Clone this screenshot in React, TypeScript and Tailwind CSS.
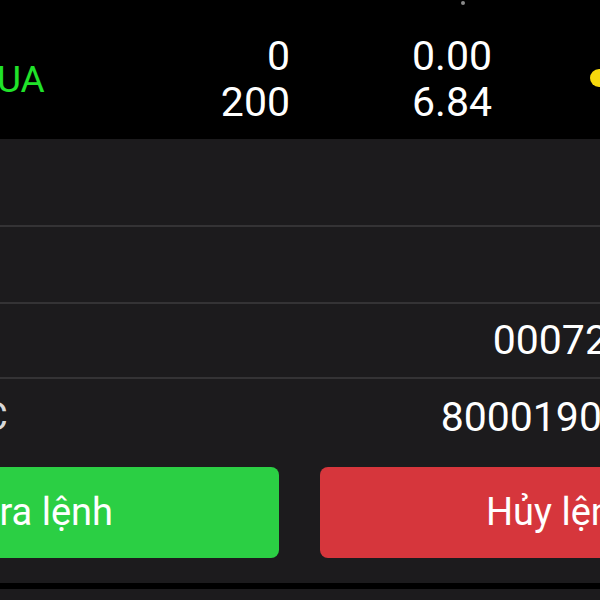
export default function App() {
  return (
    <div className="relative w-[600px] h-[600px] overflow-hidden bg-[#1c1b1d] font-['Roboto',sans-serif] text-white">
      {/* quote row */}
      <div className="relative h-[139px] bg-black">
        <div className="absolute left-[461px] top-[1px] w-[4px] h-[4px] rounded-full bg-[#8a8a8a]" />
        <div className="flex items-center h-full">
          <div className="w-[200px] shrink-0 -ml-[3px] mt-[20px] text-[37px] text-[#20e22a] leading-none">UA</div>
          <div className="w-[93px] shrink-0 text-right text-[41px] leading-[46px] mt-[18px]">
            <div>0</div>
            <div>200</div>
          </div>
          <div className="w-[202px] shrink-0 text-right text-[41px] leading-[46px] mt-[18px]">
            <div>0.00</div>
            <div>6.84</div>
          </div>
          <div className="ml-[98px] mt-[17px] w-[18px] h-[18px] shrink-0 rounded-full bg-[#f7d90c]" />
        </div>
      </div>

      {/* detail rows */}
      <div className="h-[88px] border-b-2 border-[#343335]" />
      <div className="h-[77px] border-b-2 border-[#343335]" />
      <div className="h-[75px] border-b-2 border-[#343335] flex items-center justify-end">
        <span className="text-[41px] leading-none whitespace-nowrap -mr-[31px]">000720</span>
      </div>
      <div className="h-[76px] flex items-center justify-between">
        <span className="text-[38px] text-[#d8d8d8] leading-none -ml-[17px]">C</span>
        <span className="text-[41px] leading-none whitespace-nowrap -mr-[25px]">80001900</span>
      </div>

      {/* buttons */}
      <div className="flex gap-[41px] mt-[12px] -ml-[195px]">
        <div className="w-[474px] h-[91px] shrink-0 rounded-[8px] bg-[#2bcf44] flex items-center justify-end pr-[166px]">
          <span className="text-[38px] whitespace-nowrap">ra lệnh</span>
        </div>
        <div className="w-[474px] h-[91px] shrink-0 rounded-[8px] bg-[#d6363c] flex items-center justify-start pl-[166px]">
          <span className="text-[38px] whitespace-nowrap">Hủy lệnh</span>
        </div>
      </div>

      <div className="mt-[25px] h-[6px] bg-black" />
    </div>
  )
}
